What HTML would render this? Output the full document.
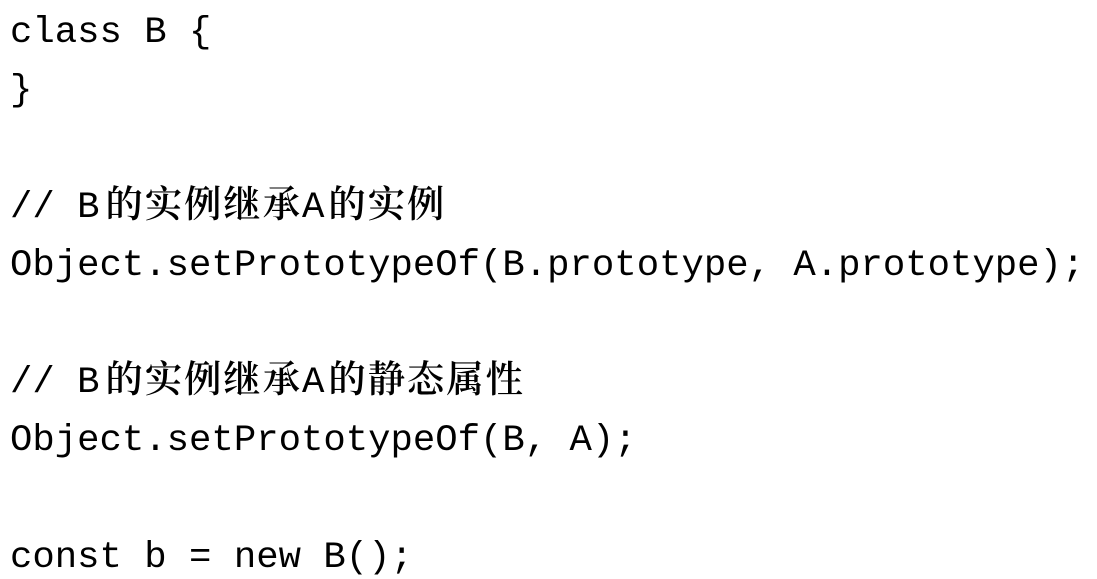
<!DOCTYPE html>
<html><head><meta charset="utf-8"><style>
html,body{margin:0;padding:0;background:#fff;width:1097px;height:579px;overflow:hidden}
.w{padding:4px 0 0 10px;font-family:"Liberation Mono",monospace;font-size:37.3px;color:#000}
.l{height:58.3px;line-height:58.3px;white-space:pre;overflow:hidden}
.c{font-family:"Noto Serif CJK SC","Noto Sans CJK SC",serif;letter-spacing:2px;font-weight:600;line-height:1}
.f{margin-left:6px}
.a{margin-right:4px}
</style></head><body>
<div class="w">
<div class="l">class B {</div>
<div class="l">}</div>
<div class="l"> </div>
<div class="l">// B<span class="c f">的实例继承</span><span class="a">A</span><span class="c">的实例</span></div>
<div class="l">Object.setPrototypeOf(B.prototype, A.prototype);</div>
<div class="l"> </div>
<div class="l">// B<span class="c f">的实例继承</span><span class="a">A</span><span class="c">的静态属性</span></div>
<div class="l">Object.setPrototypeOf(B, A);</div>
<div class="l"> </div>
<div class="l">const b = new B();</div>
</div>
</body></html>
